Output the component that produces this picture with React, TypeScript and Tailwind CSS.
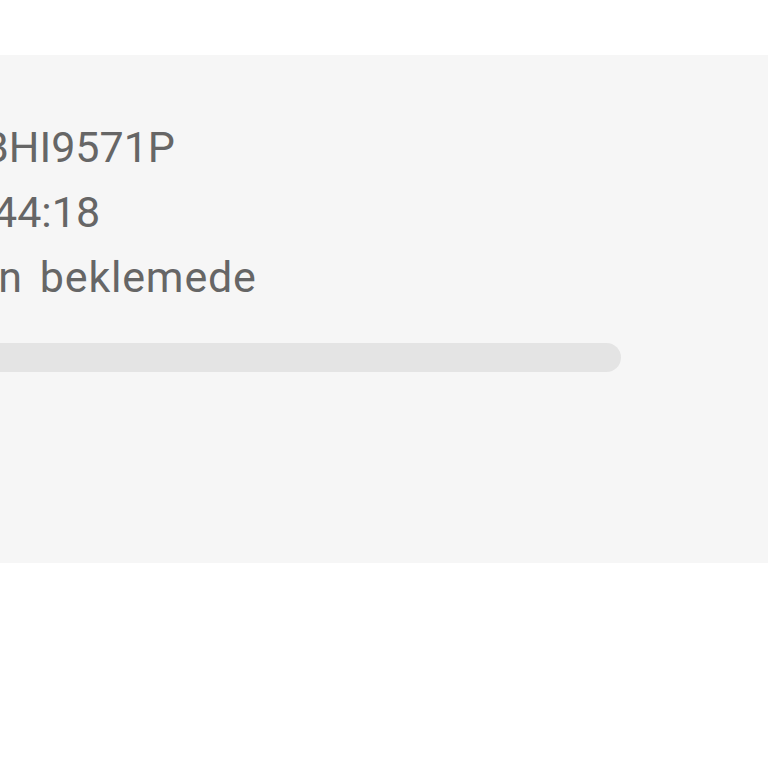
export default function App() {
  return (
    <div className="w-[768px] h-[768px] bg-white overflow-hidden" style={{ fontFamily: 'Roboto, "Noto Sans", sans-serif' }}>
      <div className="mt-[55px] h-[508px] bg-[#f6f6f6] pt-[60px] overflow-hidden">
        <div className="text-[43px] leading-[65px] text-[#666666] whitespace-nowrap">
          <div className="-ml-[18px]">BHI9571P</div>
          <div className="-ml-[7px]">44:18</div>
          <div className="-ml-[13px] tracking-[0.8px] [word-spacing:5.6px]">in beklemede</div>
        </div>
        <div className="mt-[33px] -ml-[20px] w-[641px] h-[29px] rounded-full bg-[#e4e4e4]" />
      </div>
    </div>
  );
}
